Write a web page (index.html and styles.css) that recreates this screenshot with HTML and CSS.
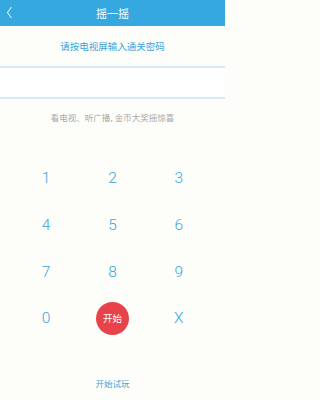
FILE: index.html
```html
<!DOCTYPE html>
<html lang="zh">
<head>
<meta charset="utf-8">
<title>摇一摇</title>
<link rel="stylesheet" href="styles.css">
</head>
<body>
<div class="header">
  <div class="back">
    <svg width="26" height="26" viewBox="0 0 26 26"><polyline points="11.5,7 7.5,12.5 11.5,18" fill="none" stroke="#cfe9f8" stroke-width="1.2"/></svg>
  </div>
  <div class="title">摇一摇</div>
  <div class="spacer"></div>
</div>
<div class="prompt">请按电视屏输入通关密码</div>
<div class="input"></div>
<div class="tip">看电视、听广播, 金币大奖摇惊喜</div>
<div class="keypad">
  <div class="key">1</div><div class="key">2</div><div class="key">3</div>
  <div class="key">4</div><div class="key">5</div><div class="key">6</div>
  <div class="key">7</div><div class="key">8</div><div class="key">9</div>
  <div class="key">0</div><div class="key"><div class="start">开始</div></div><div class="key">X</div>
</div>
<div class="trial">开始试玩</div>
</body>
</html>
```
FILE: styles.css
```css
html, body {
  margin: 0;
  padding: 0;
}
body {
  background: #fdfdf9;
  font-family: "Noto Sans CJK SC", "Liberation Sans", sans-serif;
  width: 225px;
  height: 400px;
  overflow: hidden;
}
.header {
  height: 26px;
  background: #35a8df;
  display: grid;
  grid-template-columns: 26px 1fr 26px;
  align-items: center;
}
.back {
  height: 26px;
}
.back svg {
  display: block;
}
.title {
  text-align: center;
  color: #ffffff;
  font-size: 11px;
  line-height: 26px;
}
.prompt {
  height: 40px;
  line-height: 40px;
  text-align: center;
  color: #3aa5dd;
  font-size: 9.5px;
}
.input {
  height: 29px;
  background: #ffffff;
  border-top: 2px solid #d5ebf8;
  border-bottom: 2px solid #d5ebf8;
}
.tip {
  margin-top: 12px;
  line-height: 12px;
  text-align: center;
  color: #a9a9a9;
  font-size: 8.5px;
}
.keypad {
  margin-top: 32px;
  padding: 0 13px;
  display: grid;
  grid-template-columns: repeat(3, 1fr);
  grid-auto-rows: 46.67px;
}
.key {
  display: flex;
  align-items: center;
  justify-content: center;
  color: #3aa7df;
  font-family: Roboto, "Liberation Sans", sans-serif;
  font-weight: 300;
  font-size: 15.5px;
}
.start {
  width: 33px;
  height: 33px;
  border-radius: 50%;
  background: #e8434b;
  color: #ffffff;
  font-family: "Noto Sans CJK SC", sans-serif;
  font-weight: 400;
  font-size: 9.5px;
  display: flex;
  align-items: center;
  justify-content: center;
}
.trial {
  margin-top: 35px;
  line-height: 12px;
  text-align: center;
  color: #3aa5dd;
  font-size: 8.5px;
}
```
